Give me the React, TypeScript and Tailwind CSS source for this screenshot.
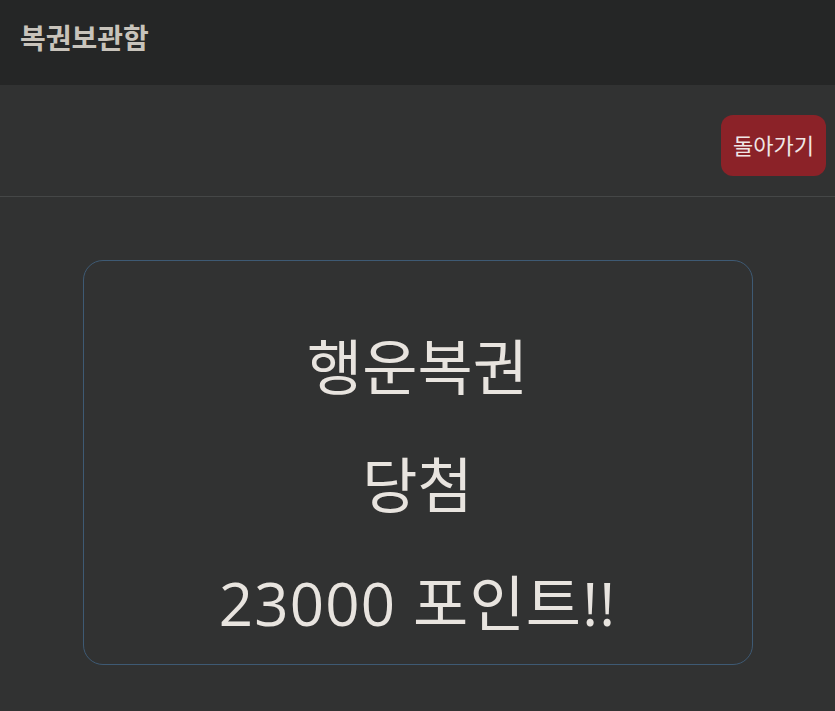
export default function App() {
  const lines = [
    { text: "행운복권", spacing: "" },
    { text: "당첨", spacing: "" },
    { text: "23000 포인트!!", spacing: "tracking-[1.2px]" },
  ];

  return (
    <div
      className="min-h-screen bg-[#313232]"
      style={{ fontFamily: '"Open Sans", "Noto Sans CJK KR", sans-serif' }}
    >
      {/* 상단 헤더 */}
      <header className="h-[85px] bg-[#252626] flex items-center px-5 pb-[10px]">
        <h1 className="text-[28px] font-bold text-[#c8c3bb]">복권보관함</h1>
      </header>

      {/* 툴바 */}
      <div className="h-[112px] flex items-center justify-end pr-[9px] border-b border-[#454747]">
        <button className="h-[61px] px-[12px] rounded-xl bg-[#8b2228] text-[22px] text-[#f0e6e6] mt-[9px]">
          돌아가기
        </button>
      </div>

      {/* 결과 카드 */}
      <div className="pt-[63px] flex justify-center">
        <div className="w-[670px] h-[405px] rounded-[20px] border border-[#3e5a74] flex flex-col items-center pt-[74px] gap-[54px]">
          {lines.map((line) => (
            <p key={line.text} className={`text-[60px] leading-[64px] text-[#e8e4df] ${line.spacing}`}>
              {line.text}
            </p>
          ))}
        </div>
      </div>
    </div>
  );
}
